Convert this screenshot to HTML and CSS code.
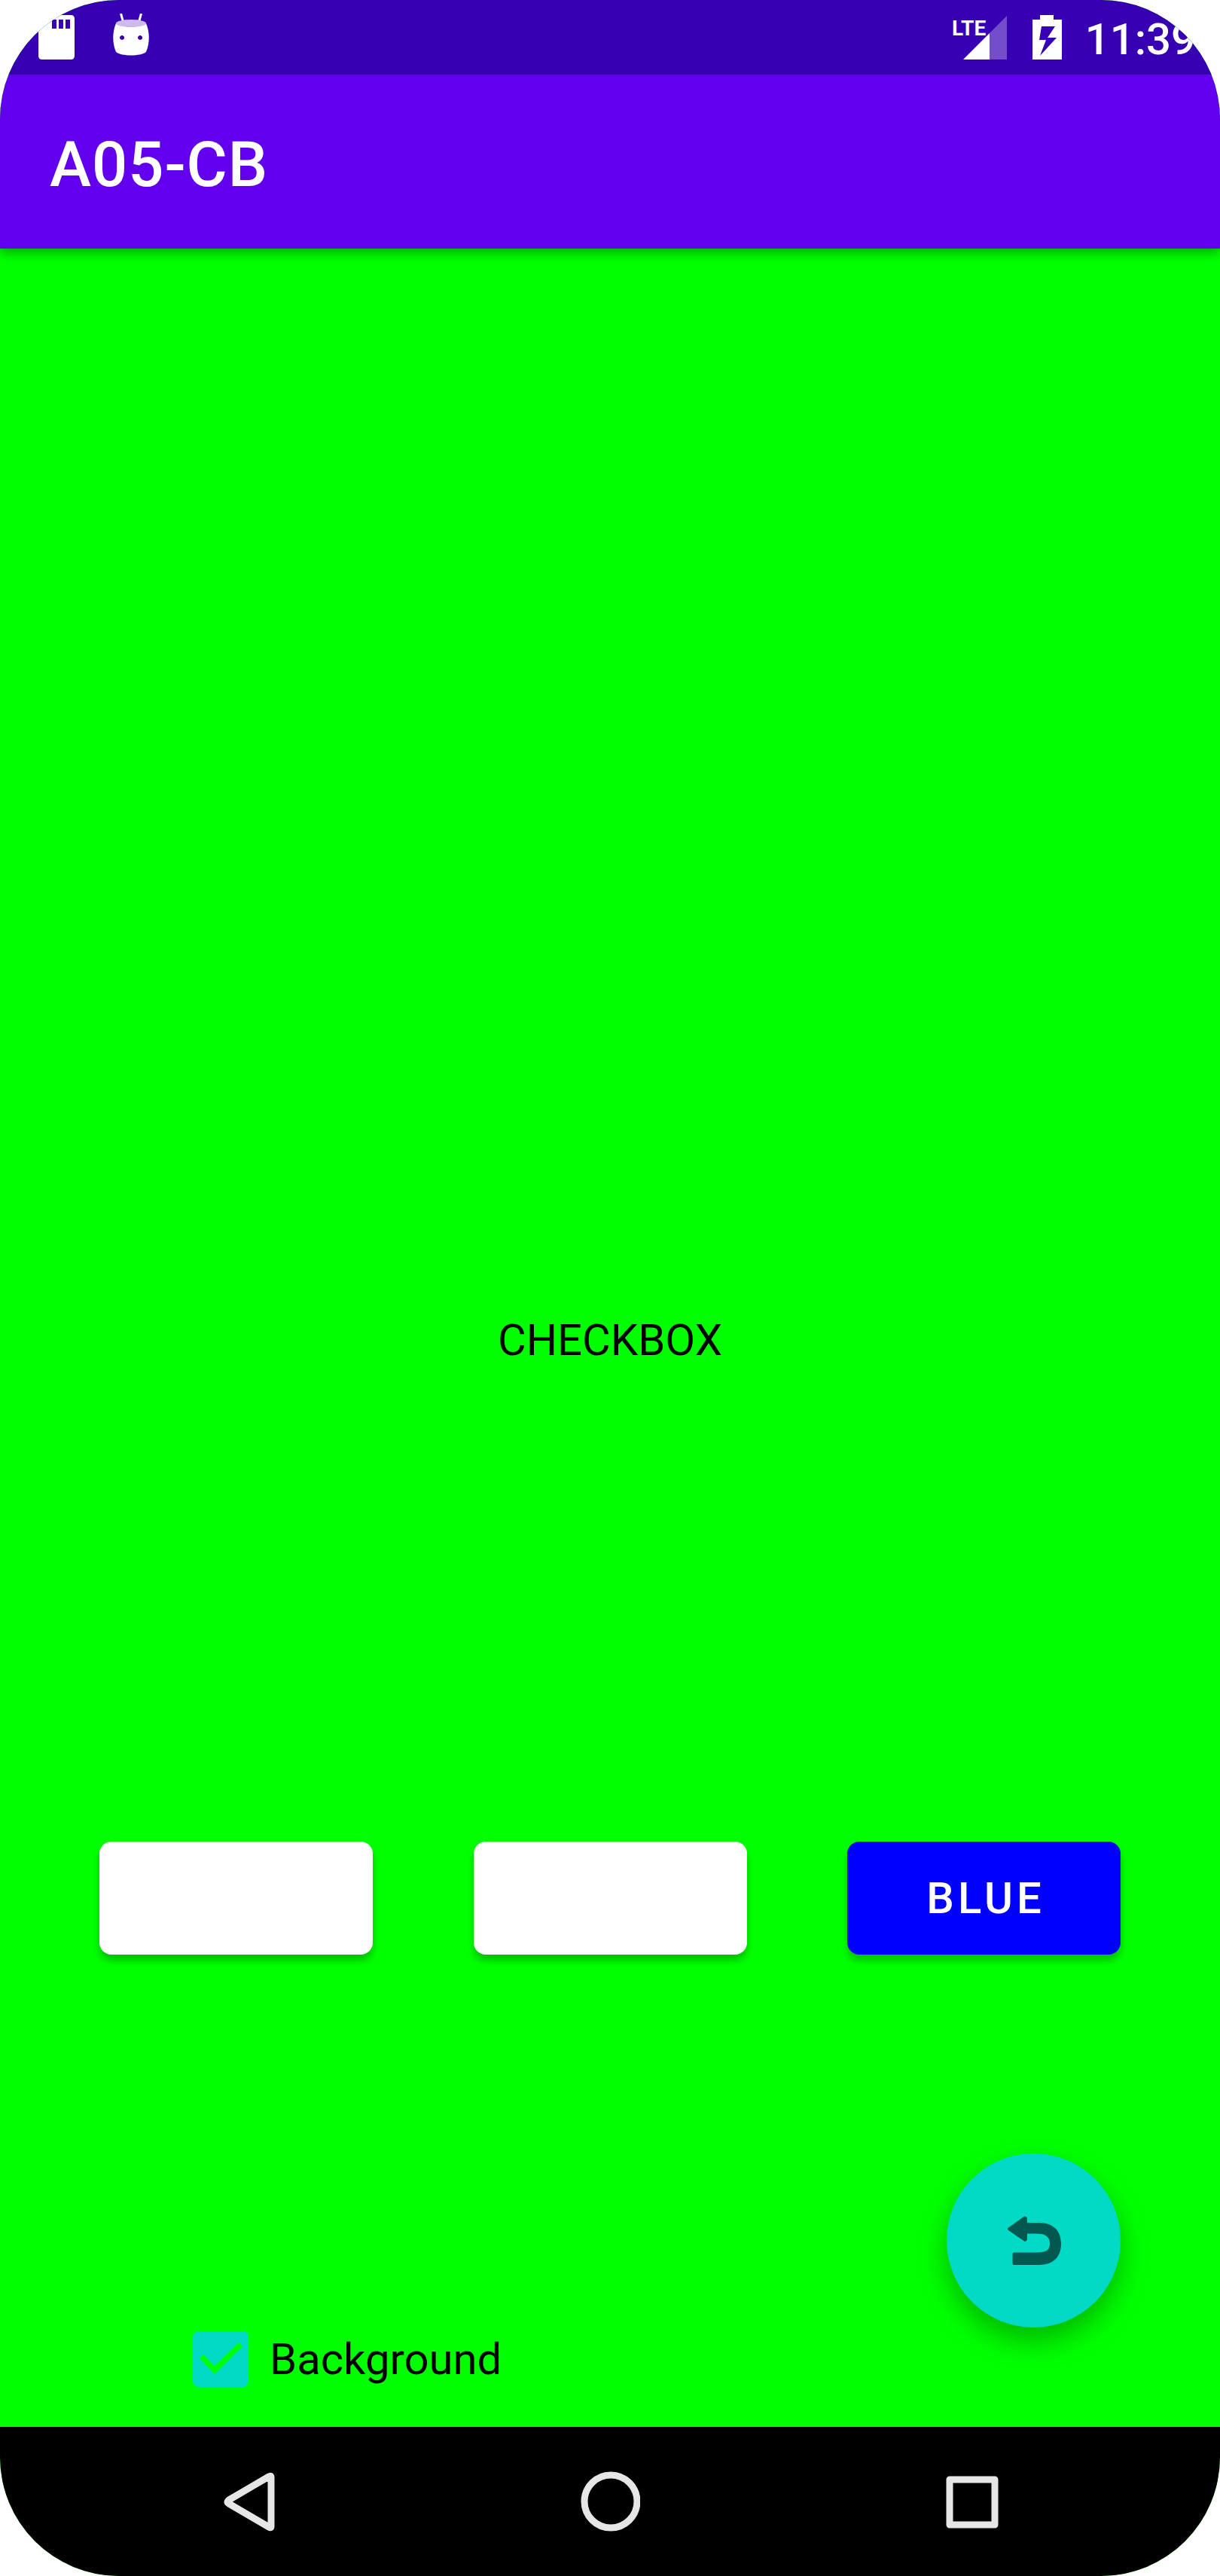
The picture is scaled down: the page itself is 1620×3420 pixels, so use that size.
FILE: index.html
```html
<!DOCTYPE html>
<html lang="en">
<head>
<meta charset="utf-8">
<meta name="viewport" content="width=device-width, initial-scale=1">
<title>A05-CB</title>
<link rel="stylesheet" href="styles.css">
</head>
<body>
<div class="screen">
  <div class="status-bar">
    <div class="status-group status-notifications">
      <svg class="status-icon" width="48" height="63" viewBox="0 0 48 63" role="img" aria-label="SD card">
        <path fill="#fff" fill-rule="evenodd" d="M18 2H43Q48 2 48 7V56Q48 61 43 61H5Q0 61 0 56V20ZM18 8V20H24V8ZM27 8V20H33V8ZM36 8V20H42V8Z"/>
      </svg>
      <svg class="status-icon" width="48" height="63" viewBox="0 0 48 63" role="img" aria-label="Android">
        <path stroke="#fff" stroke-width="3" d="M10.500 0L13.500 11M37.500 0L34.500 11"/>
        <path fill="#fff" fill-rule="evenodd" d="M4 13C12 19 36 19 44 13C49 25 49 39 44 51C37 57 11 57 4 51C-1 39 -1 25 4 13ZM12 29a3 3 0 1 0 .1 0ZM36 29a3 3 0 1 0 .1 0Z"/>
        <ellipse cx="24" cy="13" rx="20" ry="5" fill="#cdbceb"/>
      </svg>
    </div>
    <div class="status-group status-system">
      <svg class="status-icon" width="76" height="63" viewBox="0 0 76 63" role="img" aria-label="LTE signal">
        <path fill="#fff" fill-opacity=".3" d="M50 26L73 3V61H50Z"/>
        <path fill="#fff" d="M15 61L50 26V61Z"/>
        <text class="network-type" x="0" y="29">LTE</text>
      </svg>
      <svg class="status-icon" width="39" height="63" viewBox="0 0 39 63" role="img" aria-label="Battery charging">
        <path fill="#fff" fill-rule="evenodd" d="M10 2H28V8H39V61H0V8H10ZM12 17L9 35H18L10 56L32 32H20L30 17Z"/>
      </svg>
      <time class="clock">11:39</time>
    </div>
  </div>
  <header class="app-bar">
    <h1 class="app-title">A05-CB</h1>
  </header>
  <main class="content">
    <p class="caption">CHECKBOX</p>
    <div class="controls">
      <div class="color-buttons">
        <button class="color-button" type="button" aria-label="Red"></button>
        <button class="color-button" type="button" aria-label="Green"></button>
        <button class="color-button color-button-blue" type="button">BLUE</button>
      </div>
      <div class="bottom-row">
        <label class="option" for="background">
          <input class="option-box" type="checkbox" id="background" checked>
          <span>Background</span>
        </label>
        <button class="fab" type="button" aria-label="Back">
          <svg width="72" height="66" viewBox="79 84 72 66" aria-hidden="true">
            <path fill="#005850" d="M81 99.500L102 84.500Q105.500 84 106 87V93H122C141 93 151 104 151 121C151 138 141 149 122 149H88.500Q86.500 149 86.500 147V134.500Q86.500 132.500 88.500 132.500H119C131 132.500 136 129 136 121C136 112 131 107.500 119 107.500H106V115Q105.500 118.500 102 117.500L81 103Q79 101 81 99.500Z"/>
          </svg>
        </button>
      </div>
    </div>
  </main>
  <nav class="nav-bar" aria-label="System">
    <button class="nav-button" type="button" aria-label="Back">
      <svg width="80" height="80" viewBox="0 0 80 80"><path class="nav-shape" d="M67 7Q70 5 70 8V73Q70 76 67 74L14 43Q10 41 14 38Z"/></svg>
    </button>
    <button class="nav-button" type="button" aria-label="Home">
      <svg width="80" height="80" viewBox="0 0 80 80"><circle class="nav-shape" cx="41" cy="40" r="35"/></svg>
    </button>
    <button class="nav-button" type="button" aria-label="Recent apps">
      <svg width="80" height="80" viewBox="0 0 80 80"><rect class="nav-shape" x="11" y="11" width="60" height="60"/></svg>
    </button>
  </nav>
</div>
</body>
</html>
```
FILE: styles.css
```css
* {
  box-sizing: border-box;
}

body {
  margin: 0;
  background: #fff;
  font-family: Roboto, sans-serif;
  font-size: 58px;
  line-height: 68px;
}

button {
  border: 0;
  padding: 0;
  font: inherit;
  color: inherit;
}

.screen {
  display: flex;
  flex-direction: column;
  min-height: 100vh;
  overflow: hidden;
  border-radius: 158px;
  background: #0f0;
}

.status-bar {
  display: flex;
  align-items: center;
  justify-content: space-between;
  height: 99px;
  padding: 0 32px 0 51px;
  background: #3700b3;
  color: #fff;
}

.status-group {
  display: flex;
  align-items: center;
}

.status-notifications {
  gap: 51px;
}

.status-system {
  gap: 31px;
}

.status-icon {
  display: block;
}

.network-type {
  fill: #fff;
  font: 700 28px Roboto, sans-serif;
}

.clock {
  padding-top: 4px;
  font-weight: 500;
}

.app-bar {
  display: flex;
  align-items: center;
  height: 231px;
  padding: 8px 66px 0;
  background: #6200ee;
  color: #fff;
  box-shadow: 0 6px 12px rgba(0, 0, 0, 0.3);
}

.app-title {
  margin: 0;
  font-size: 83px;
  line-height: 96px;
  font-weight: 500;
  letter-spacing: 1px;
}

.content {
  flex: 1;
  display: grid;
  grid-template-rows: 1fr auto 1fr;
}

.caption {
  grid-row: 2;
  margin: 0;
  padding-top: 6px;
  text-align: center;
  color: #000;
}

.controls {
  grid-row: 3;
  display: flex;
  flex-direction: column;
  justify-content: flex-end;
  gap: 264px;
  padding: 0 132px;
}

.color-buttons {
  display: flex;
  justify-content: space-between;
}

.color-button {
  width: 363px;
  height: 150px;
  padding-left: 5px;
  border-radius: 16px;
  background: #fff;
  color: #fff;
  font-weight: 500;
  letter-spacing: 5px;
  box-shadow: 0 8px 10px rgba(0, 0, 0, 0.24);
}

.color-button-blue {
  background: #00f;
}

.bottom-row {
  display: flex;
  align-items: flex-end;
  justify-content: space-between;
}

.option {
  display: flex;
  align-items: center;
  gap: 28px;
  height: 132px;
  margin: 0 0 24px 124px;
  color: #000;
}

.option-box {
  appearance: none;
  width: 74px;
  height: 74px;
  margin: 0;
  border-radius: 8px;
  background: #03dac5;
}

.option-box:checked::before {
  content: "";
  display: block;
  width: 74px;
  height: 74px;
  background: #0f0;
  clip-path: polygon(9px 36px, 14px 31px, 29px 46px, 61px 15px, 66px 20px, 29px 57px);
}

.fab {
  display: flex;
  align-items: center;
  justify-content: center;
  width: 231px;
  height: 231px;
  margin-bottom: 132px;
  border-radius: 50%;
  background: #03dac5;
  box-shadow: 0 18px 36px rgba(0, 0, 0, 0.28);
}

.nav-bar {
  display: grid;
  grid-template-columns: repeat(3, 1fr);
  height: 198px;
  padding: 0 90px;
  background: #000;
}

.nav-button {
  display: flex;
  align-items: center;
  justify-content: center;
  background: transparent;
}

.nav-shape {
  fill: none;
  stroke: #e6e6e6;
  stroke-width: 9px;
  stroke-linejoin: round;
}
```
